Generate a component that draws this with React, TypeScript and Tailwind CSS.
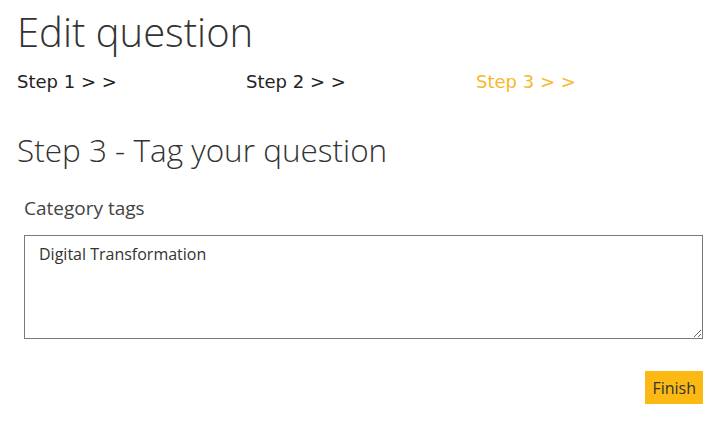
import React, { useState } from 'react';

const App: React.FC = () => {
  const [tags, setTags] = useState('Digital Transformation');

  return (
    <div className="w-[722px] h-[430px] bg-white text-[#333] overflow-hidden" style={{ fontFamily: '"Open Sans", sans-serif' }}>
      <div className="pl-[17px] pr-[19px]">
        {/* Title */}
        <h1 className="text-[40px] font-light leading-[40px] pt-[12px] text-[#333]">Edit question</h1>

        {/* Steps */}
        <div className="flex mt-[19px] text-[18px] leading-[22px]" style={{ fontFamily: '"DejaVu Sans", Verdana, sans-serif' }}>
          <span className="w-[229px] text-[#222]">Step 1 &gt; &gt;</span>
          <span className="w-[230px] text-[#222]">Step 2 &gt; &gt;</span>
          <span className="text-[#fbb62a]">Step 3 &gt; &gt;</span>
        </div>

        {/* Section */}
        <h2 className="text-[31.5px] font-light leading-[40px] mt-[37px] text-[#333]">Step 3 - Tag your question</h2>

        <div className="pl-[7px] mt-[25px]">
          <label className="block text-[19px] leading-[26px] text-[#444]">Category tags</label>
          <textarea
            className="block w-full h-[104px] mt-[14px] border border-[#7a7a7a] px-[14px] py-[7px] text-[16px] leading-[22px] text-[#333] outline-none"
            value={tags}
            onChange={(e) => setTags(e.target.value)}
          />
          <div className="flex justify-end mt-[32px]">
            <button className="bg-[#fdb913] text-[#333] text-[16px] leading-[22px] px-[7px] py-[5px] h-[33px]">Finish</button>
          </div>
        </div>
      </div>
    </div>
  );
};

export default App;
